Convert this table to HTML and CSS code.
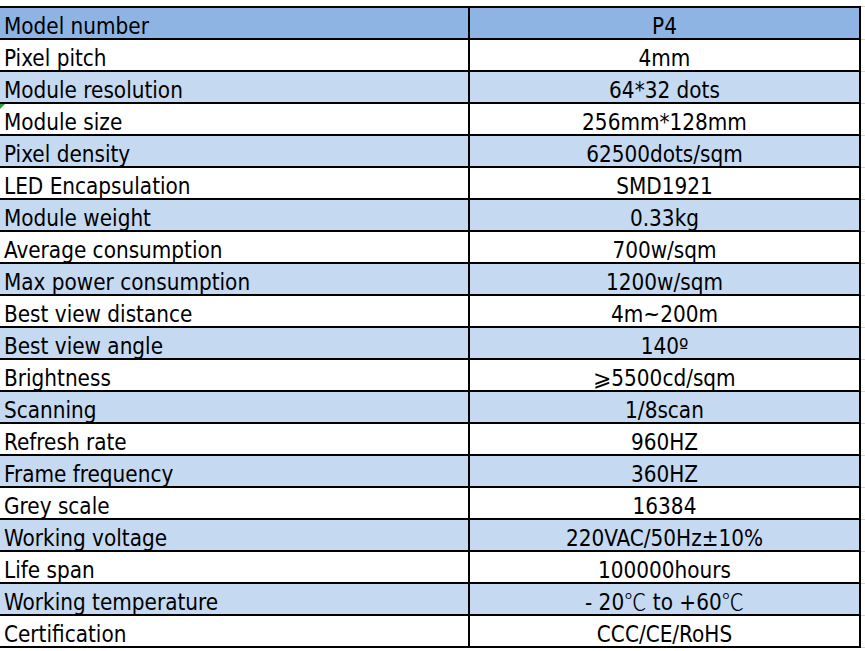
FILE: index.html
```html
<!DOCTYPE html>
<html>
<head>
<meta charset="utf-8">
<link rel="stylesheet" href="styles.css">
</head>
<body>
<table class="spec">
<tr class="head"><td class="k">Model number</td><td class="v">P4</td><td class="g"></td></tr>
<tr><td class="k">Pixel pitch</td><td class="v">4mm</td><td class="g"></td></tr>
<tr class="alt"><td class="k">Module resolution</td><td class="v">64*32 dots</td><td class="g"></td></tr>
<tr><td class="k flag">Module size</td><td class="v">256mm*128mm</td><td class="g"></td></tr>
<tr class="alt"><td class="k">Pixel density</td><td class="v">62500dots/sqm</td><td class="g"></td></tr>
<tr><td class="k">LED Encapsulation</td><td class="v">SMD1921</td><td class="g"></td></tr>
<tr class="alt"><td class="k">Module weight</td><td class="v">0.33kg</td><td class="g"></td></tr>
<tr><td class="k">Average consumption</td><td class="v">700w/sqm</td><td class="g"></td></tr>
<tr class="alt"><td class="k">Max power consumption</td><td class="v">1200w/sqm</td><td class="g"></td></tr>
<tr><td class="k">Best view distance</td><td class="v">4m~200m</td><td class="g"></td></tr>
<tr class="alt"><td class="k">Best view angle</td><td class="v">140º</td><td class="g"></td></tr>
<tr><td class="k">Brightness</td><td class="v"><span class="cjk">⩾</span>5500cd/sqm</td><td class="g"></td></tr>
<tr class="alt"><td class="k">Scanning</td><td class="v">1/8scan</td><td class="g"></td></tr>
<tr><td class="k">Refresh rate</td><td class="v">960HZ</td><td class="g"></td></tr>
<tr class="alt"><td class="k">Frame frequency</td><td class="v">360HZ</td><td class="g"></td></tr>
<tr><td class="k">Grey scale</td><td class="v">16384</td><td class="g"></td></tr>
<tr class="alt"><td class="k">Working voltage</td><td class="v">220VAC/50Hz±10%</td><td class="g"></td></tr>
<tr><td class="k">Life span</td><td class="v">100000hours</td><td class="g"></td></tr>
<tr class="alt"><td class="k">Working temperature</td><td class="v">- 20<span class="cjk">℃</span> to +60<span class="cjk">℃</span></td><td class="g"></td></tr>
<tr><td class="k">Certification</td><td class="v">CCC/CE/RoHS</td><td class="g"></td></tr>
</table>
</body>
</html>
```
FILE: styles.css
```css
html, body {
  margin: 0;
  padding: 0;
  background: #ffffff;
}
.spec {
  margin-top: 6px;
  border-collapse: separate;
  border-spacing: 0;
  width: 865px;
  table-layout: fixed;
  font-family: "DejaVu Sans Condensed", "DejaVu Sans", "Noto Sans CJK SC", sans-serif;
  font-stretch: condensed;
  font-size: 22.3px;
  color: #000000;
}
.spec td {
  padding: 6px 0 0 0;
  line-height: 24px;
  height: 24px;
  border-bottom: 2px solid #000000;
  white-space: nowrap;
  overflow: hidden;
  vertical-align: top;
}
.spec tr:first-child td {
  border-top: 2px solid #000000;
}
.spec .k {
  width: 464px;
  padding-left: 4px;
  border-right: 2px solid #000000;
  text-align: left;
}
.spec .v {
  width: 389px;
  border-right: 2px solid #000000;
  text-align: center;
}
.spec td.g {
  width: 4px;
  padding: 0;
  height: 31px;
  border-right: 0;
  border-top: 0;
  border-bottom: 1px solid #d4d4d4;
  background: #ffffff;
}
.spec tr:first-child td.g {
  border-top: 1px solid #d4d4d4;
  height: 30px;
}
.spec .head td.k,
.spec .head td.v {
  background: #8db4e2;
}
.spec .alt td.k,
.spec .alt td.v {
  background: #c5d9f1;
}
.cjk {
  font-family: "Noto Sans CJK SC", sans-serif;
  font-weight: 300;
  line-height: 0;
}
.flag {
  position: relative;
}
.flag::before {
  content: "";
  position: absolute;
  left: 0;
  top: 0;
  border-top: 5px solid #2e9e3e;
  border-right: 5px solid transparent;
}
```
